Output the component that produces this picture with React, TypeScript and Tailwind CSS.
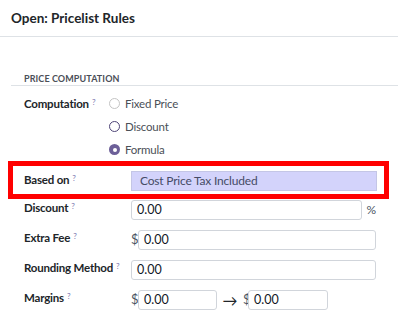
import React from "react";

function Help() {
  return (
    <sup className="ml-[3px] text-[8px] font-normal text-[#7b76b0] relative -top-[3px]">?</sup>
  );
}

function Label({ children }: { children: React.ReactNode }) {
  return (
    <div className="w-[107px] shrink-0 whitespace-nowrap text-[11.5px] tracking-[-0.2px] font-bold text-[#212529] leading-[16px]">
      {children}
      <Help />
    </div>
  );
}

function Input({ value, className = "" }: { value: string; className?: string }) {
  return (
    <div
      className={
        "h-[20px] border border-[#d1d5db] rounded-[3px] bg-white flex items-center pl-[5px] text-[12.5px] text-[#111827] " +
        className
      }
    >
      {value}
    </div>
  );
}

function Radio({ state, label }: { state: "off" | "idle" | "on"; label: string }) {
  return (
    <div className="h-[23px] flex items-center gap-[5px]">
      {state === "on" ? (
        <span className="w-[11px] h-[11px] rounded-full bg-[#6c5f98] flex items-center justify-center">
          <span className="w-[4px] h-[4px] rounded-full bg-white" />
        </span>
      ) : (
        <span
          className={
            "w-[11px] h-[11px] rounded-full border " +
            (state === "off" ? "border-[#c4c4c4]" : "border-[#4e4477]")
          }
        />
      )}
      <span className="text-[11.5px] tracking-[-0.2px] text-[#4b5057]">{label}</span>
    </div>
  );
}

export default function App() {
  return (
    <div className="w-[398px] h-[327px] bg-white overflow-hidden font-['Lato',sans-serif]">
      {/* header */}
      <div className="h-[37px] border-b border-[#dee2e6] pl-[11px] flex items-center text-[13.5px] font-bold text-[#212529]">
        Open: Pricelist Rules
      </div>

      <div className="pl-[11px] pt-[36px]">
        <div className="border-b border-[#dee2e6] pl-[13px] pb-[1px] text-[9px] font-bold tracking-[0.1px] text-[#4b4f58] uppercase leading-[11px]">
          Price Computation
        </div>
      </div>

      <div className="pl-[24px] pr-[22px] pt-[6px]">
        {/* computation */}
        <div className="flex">
          <div className="w-[85px] shrink-0 pt-[4px]">
            <div className="whitespace-nowrap text-[11.5px] tracking-[-0.2px] font-bold text-[#212529] leading-[16px]">
              Computation
              <Help />
            </div>
          </div>
          <div className="flex flex-col">
            <Radio state="off" label="Fixed Price" />
            <Radio state="idle" label="Discount" />
            <Radio state="on" label="Formula" />
          </div>
        </div>

        {/* based on, highlighted */}
        <div className="-ml-[16px] -mr-[13px] border-[5px] border-[#ff0000] pl-[11px] pr-[7px] pt-[5px] pb-[3px] flex">
          <div className="pt-[1px]">
            <Label>Based on</Label>
          </div>
          <div className="flex-1 h-[20px] bg-[#d3d3fb] border border-[#c4c6e6] flex items-center pl-[8px] text-[12px] tracking-[-0.2px] text-[#454b66]">
            Cost Price Tax Included
          </div>
        </div>

        {/* discount */}
        <div className="flex mt-[1px]">
          <Label>Discount</Label>
          <div className="flex-1 flex items-center">
            <Input value="0.00" className="flex-1" />
            <span className="w-[14px] text-right text-[12px] text-[#4b5563]">%</span>
          </div>
        </div>

        <div className="flex mt-[10px]">
          <Label>Extra Fee</Label>
          <div className="flex-1 flex items-center">
            <span className="w-[7px] text-[13px] text-[#4b5563]">$</span>
            <Input value="0.00" className="flex-1" />
          </div>
        </div>

        <div className="flex mt-[10px]">
          <Label>Rounding Method</Label>
          <Input value="0.00" className="flex-1" />
        </div>

        <div className="flex mt-[10px]">
          <Label>Margins</Label>
          <div className="flex items-center">
            <span className="w-[7px] text-[13px] text-[#4b5563]">$</span>
            <Input value="0.00" className="w-[79px]" />
            <span className="w-[26px] text-center text-[15px] leading-[16px] text-[#212529]">→</span>
            <span className="w-[5px] text-[13px] text-[#4b5563]">$</span>
            <Input value="0.00" className="w-[80px]" />
          </div>
        </div>
      </div>
    </div>
  );
}
